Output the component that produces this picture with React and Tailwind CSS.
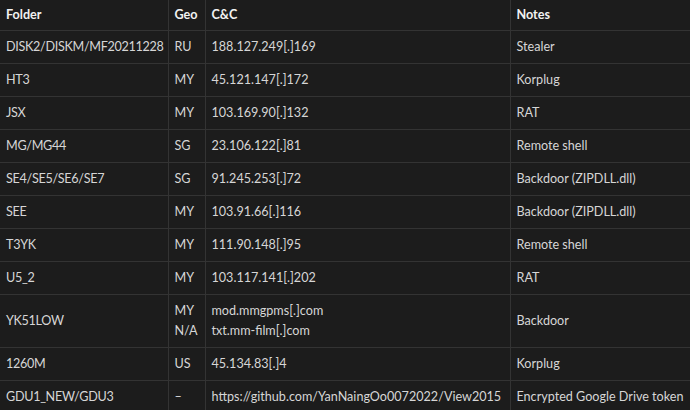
export default function App() {
  const rows = [
    ["DISK2/DISKM/MF20211228", ["RU"], ["188.127.249[.]169"], "Stealer"],
    ["HT3", ["MY"], ["45.121.147[.]172"], "Korplug"],
    ["JSX", ["MY"], ["103.169.90[.]132"], "RAT"],
    ["MG/MG44", ["SG"], ["23.106.122[.]81"], "Remote shell"],
    ["SE4/SE5/SE6/SE7", ["SG"], ["91.245.253[.]72"], "Backdoor (ZIPDLL.dll)"],
    ["SEE", ["MY"], ["103.91.66[.]116"], "Backdoor (ZIPDLL.dll)"],
    ["T3YK", ["MY"], ["111.90.148[.]95"], "Remote shell"],
    ["U5_2", ["MY"], ["103.117.141[.]202"], "RAT"],
    ["YK51LOW", ["MY", "N/A"], ["mod.mmgpms[.]com", "txt.mm-film[.]com"], "Backdoor"],
    ["1260M", ["US"], ["45.134.83[.]4"], "Korplug"],
    ["GDU1_NEW/GDU3", ["–"], ["https://github.com/YanNaingOo0072022/View2015"], "Encrypted Google Drive token"],
  ];
  const cell = "px-[6px] py-[6px] align-middle border-b border-[#333333]";
  const hcell = "px-[6px] py-[5px] align-middle border-b border-[#333333] font-bold";
  return (
    <div className="w-[690px] h-[410px] overflow-hidden bg-[#1c1c1c] text-[#d6d6d6] text-[12.6px] leading-[20px]" style={{ fontFamily: "Lato, 'Noto Sans', sans-serif" }}>
      <table className="border-collapse table-fixed w-[690px]">
        <colgroup>
          <col className="w-[168px]" />
          <col className="w-[37px]" />
          <col className="w-[305px]" />
          <col className="w-[180px]" />
        </colgroup>
        <thead>
          <tr className="text-[#f2f2f2] text-left">
            <th className={hcell + " border-r"}>Folder</th>
            <th className={hcell + " border-r"}>Geo</th>
            <th className={hcell + " border-r"}>C&amp;C</th>
            <th className={hcell}>Notes</th>
          </tr>
        </thead>
        <tbody>
          {rows.map((r, i) => (
            <tr key={i}>
              <td className={cell + " border-r whitespace-nowrap tracking-[-0.3px]"}>{r[0]}</td>
              <td className={cell + " border-r whitespace-nowrap"}>
                {r[1].map((g, j) => <div key={j}>{g}</div>)}
              </td>
              <td className={cell + " border-r whitespace-nowrap"}>
                {r[2].map((g, j) => <div key={j}>{g}</div>)}
              </td>
              <td className={cell + " whitespace-nowrap"}>{r[3]}</td>
            </tr>
          ))}
        </tbody>
      </table>
    </div>
  );
}
